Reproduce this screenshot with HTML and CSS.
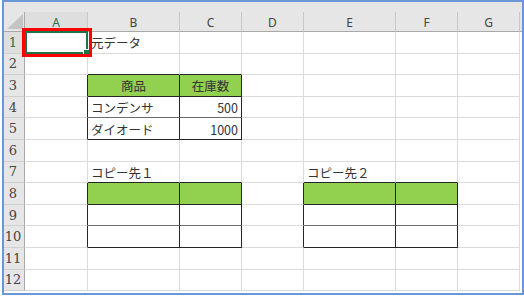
FILE: index.html
```html
<!DOCTYPE html>
<html lang="ja">
<head>
    <meta charset="UTF-8">
    <title>Sheet</title>
    <link rel="stylesheet" href="styles.css">
</head>
<body>

<div class="frame">
    <div class="sheet">
        <div class="strip"></div>

        <!-- column headers -->
        <div class="corner">
            <svg width="21" height="19" viewBox="0 0 21 19"><polygon points="3,17 19,17 19,2" fill="#c4c4c4"/></svg>
        </div>
        <div class="ch sel">A</div>
        <div class="ch">B</div>
        <div class="ch">C</div>
        <div class="ch">D</div>
        <div class="ch">E</div>
        <div class="ch">F</div>
        <div class="ch">G</div>
        <div class="ch end"></div>

        <!-- row 1 -->
        <div class="rh sel">1</div>
        <div class="c active"><span class="note"></span><span class="handle"></span></div>
        <div class="c">元データ</div>
        <div class="c"></div><div class="c"></div><div class="c"></div><div class="c"></div><div class="c"></div><div class="f"></div>

        <!-- row 2 -->
        <div class="rh">2</div>
        <div class="c"></div>
        <div class="c tt"></div><div class="c tt"></div>
        <div class="c"></div><div class="c"></div><div class="c"></div><div class="c"></div><div class="f"></div>

        <!-- row 3 -->
        <div class="rh">3</div>
        <div class="c tl"></div>
        <div class="c t hd">商品</div>
        <div class="c t hd">在庫数</div>
        <div class="c"></div><div class="c"></div><div class="c"></div><div class="c"></div><div class="f"></div>

        <!-- row 4 -->
        <div class="rh">4</div>
        <div class="c tl"></div>
        <div class="c t mid">コンデンサ</div>
        <div class="c t mid num">500</div>
        <div class="c"></div><div class="c"></div><div class="c"></div><div class="c"></div><div class="f"></div>

        <!-- row 5 -->
        <div class="rh">5</div>
        <div class="c tl"></div>
        <div class="c t">ダイオード</div>
        <div class="c t num">1000</div>
        <div class="c"></div><div class="c"></div><div class="c"></div><div class="c"></div><div class="f"></div>

        <!-- row 6 -->
        <div class="rh">6</div>
        <div class="c"></div><div class="c"></div><div class="c"></div><div class="c"></div>
        <div class="c"></div><div class="c"></div><div class="c"></div><div class="f"></div>

        <!-- row 7 -->
        <div class="rh">7</div>
        <div class="c"></div>
        <div class="c tt">コピー先１</div>
        <div class="c tt"></div>
        <div class="c"></div>
        <div class="c tt">コピー先２</div>
        <div class="c tt"></div>
        <div class="c"></div><div class="f"></div>

        <!-- row 8 -->
        <div class="rh">8</div>
        <div class="c tl"></div>
        <div class="c t hd"></div><div class="c t hd"></div>
        <div class="c tl"></div>
        <div class="c t hd"></div><div class="c t hd"></div>
        <div class="c"></div><div class="f"></div>

        <!-- row 9 -->
        <div class="rh">9</div>
        <div class="c tl"></div>
        <div class="c t mid"></div><div class="c t mid"></div>
        <div class="c tl"></div>
        <div class="c t mid"></div><div class="c t mid"></div>
        <div class="c"></div><div class="f"></div>

        <!-- row 10 -->
        <div class="rh">10</div>
        <div class="c tl"></div>
        <div class="c t"></div><div class="c t"></div>
        <div class="c tl"></div>
        <div class="c t"></div><div class="c t"></div>
        <div class="c"></div><div class="f"></div>

        <!-- row 11 -->
        <div class="rh">11</div>
        <div class="c"></div><div class="c"></div><div class="c"></div><div class="c"></div>
        <div class="c"></div><div class="c"></div><div class="c"></div><div class="f"></div>

        <!-- row 12 -->
        <div class="rh">12</div>
        <div class="c"></div><div class="c"></div><div class="c"></div><div class="c"></div>
        <div class="c"></div><div class="c"></div><div class="c"></div><div class="f"></div>
    </div>
</div>

</body>
</html>
```

FILE: styles.css
```css
* {
    margin: 0;
    padding: 0;
    box-sizing: border-box;
}

body {
    background: #fff;
    padding-left: 2px;
    font-family: "Noto Sans CJK JP", sans-serif;
}

.frame {
    width: 522px;
    height: 295px;
    border: 2px solid #6b97d6;
    background: #fff;
}

.sheet {
    display: grid;
    grid-template-columns: 21px 63px 92px 62px 62px 92px 62px 62px 1fr;
    grid-template-rows: 10px 20px repeat(12, 21.6px);
}

.strip {
    grid-column: 1 / -1;
    background: #e6e6e6;
}

/* headers */
.corner {
    background: #e6e6e6;
    border-right: 1px solid #a9a9a9;
    border-bottom: 1px solid #a9a9a9;
}

.corner svg {
    display: block;
}

.ch {
    background: #e6e6e6;
    border-right: 1px solid #c8c8c8;
    border-bottom: 1px solid #a9a9a9;
    display: flex;
    align-items: center;
    justify-content: center;
    font-family: "Noto Sans", sans-serif;
    font-size: 12px;
    color: #444;
    padding-top: 1px;
}

.ch.end {
    border-right: 0;
}

.rh {
    background: #e6e6e6;
    border-right: 1px solid #a9a9a9;
    border-bottom: 1px solid #cfcfcf;
    display: flex;
    align-items: center;
    justify-content: center;
    font-family: "DejaVu Serif", serif;
    font-size: 13px;
    color: #444;
    padding-right: 2px;
}

.ch.sel,
.rh.sel {
    background: #dedede;
    color: #217346;
}

/* cells */
.c {
    border-right: 1px solid #dadada;
    border-bottom: 1px solid #dadada;
    display: flex;
    align-items: center;
    padding: 1px 3px 0;
    font-size: 12.5px;
    color: #333;
    white-space: nowrap;
}

.f {
    background: #fff;
}

.c.tl {
    border-right-color: #262626;
}

.c.tt {
    border-bottom-color: #262626;
}

.c.t {
    border-right-color: #262626;
    border-bottom-color: #262626;
}

.c.t.mid {
    border-bottom-color: #6c6c6c;
}

.c.hd {
    background: #92d050;
    justify-content: center;
}

.c.num {
    justify-content: flex-end;
}

/* selected cell A1 */
.c.active {
    position: relative;
}

.c.active::before {
    content: "";
    position: absolute;
    left: 0;
    top: -1px;
    right: -1px;
    bottom: -1px;
    border: 2px solid #217346;
}

.handle {
    position: absolute;
    right: -2px;
    bottom: -2px;
    width: 5px;
    height: 5px;
    background: #217346;
    outline: 1px solid #fff;
    z-index: 2;
}

.note {
    position: absolute;
    left: -3px;
    top: -4px;
    width: 70px;
    height: 29px;
    border: 3px solid #ff0000;
    z-index: 3;
}
```
